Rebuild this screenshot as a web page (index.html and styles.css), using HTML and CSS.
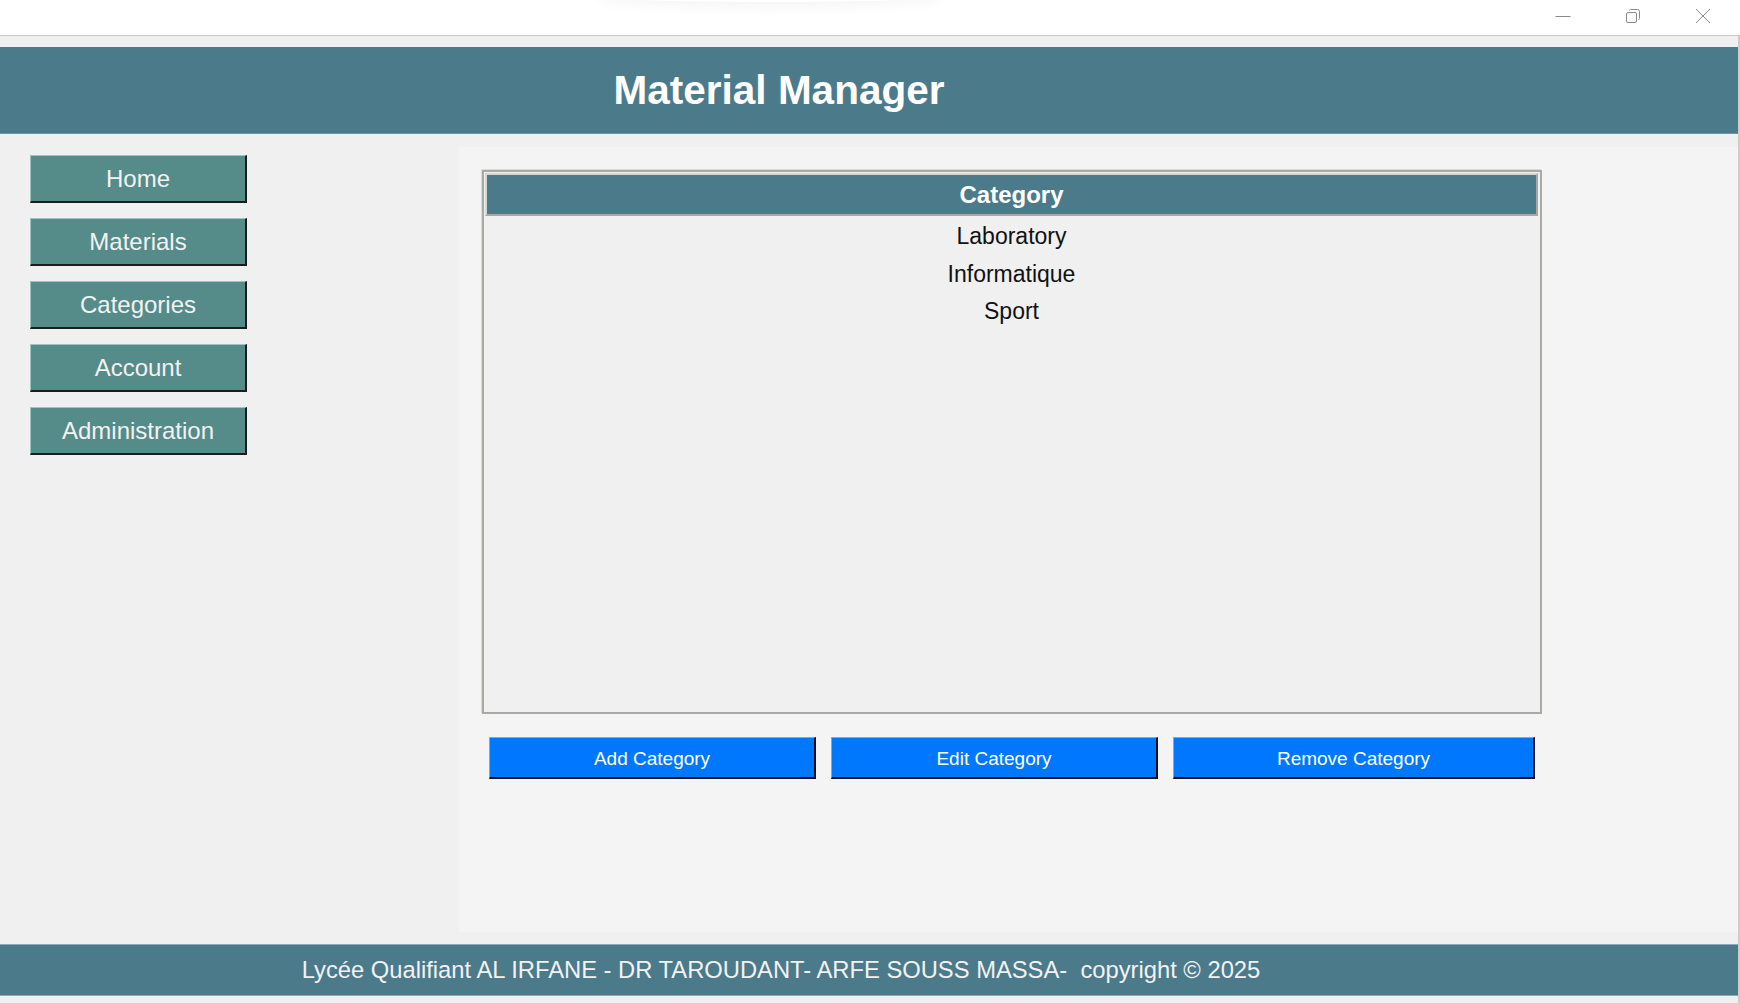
FILE: index.html
```html
<!DOCTYPE html>
<html lang="en">
<head>
<meta charset="utf-8">
<title>Material Manager</title>
<link rel="stylesheet" href="styles.css">
</head>
<body>
<div class="titlebar">
  <div class="tb-shadow"></div>
  <div class="controls">
    <svg class="ctl" width="16" height="16" viewBox="0 0 16 16"><path d="M0.5 8.5H15.5" stroke="#8a8a8a" stroke-width="1" fill="none"/></svg>
    <svg class="ctl" width="16" height="16" viewBox="0 0 16 16"><rect x="1.5" y="4.5" width="10" height="10" rx="1.5" stroke="#8a8a8a" fill="none"/><path d="M4.5 2.5 Q4.5 1.5 5.5 1.5 H12.5 Q14.5 1.5 14.5 3.5 V10.5 Q14.5 11.5 13.5 11.5" stroke="#8a8a8a" fill="none"/></svg>
    <svg class="ctl" width="16" height="16" viewBox="0 0 16 16"><path d="M1 1L15 15M15 1L1 15" stroke="#8a8a8a" stroke-width="1" fill="none"/></svg>
  </div>
</div>
<div class="app">
  <header class="header"><h1 class="title">Material Manager</h1></header>
  <div class="content">
    <nav class="sidebar">
      <div class="nav-btn">Home</div>
      <div class="nav-btn">Materials</div>
      <div class="nav-btn">Categories</div>
      <div class="nav-btn">Account</div>
      <div class="nav-btn">Administration</div>
    </nav>
    <main class="main">
      <div class="table">
        <div class="thead">Category</div>
        <div class="rows">
          <div class="row">Laboratory</div>
          <div class="row">Informatique</div>
          <div class="row">Sport</div>
        </div>
      </div>
      <div class="actions">
        <div class="act-btn w-add">Add Category</div>
        <div class="act-btn w-edit">Edit Category</div>
        <div class="act-btn w-remove">Remove Category</div>
      </div>
    </main>
  </div>
  <footer class="footer"><div class="footer-text">Lycée Qualifiant AL IRFANE - DR TAROUDANT- ARFE SOUSS MASSA-&nbsp; copyright © 2025</div></footer>
</div>
</body>
</html>
```
FILE: styles.css
```css
* { box-sizing: border-box; }
html, body { margin: 0; padding: 0; }
body {
  width: 1740px;
  height: 1003px;
  overflow: hidden;
  background: #f0f0f0;
  font-family: "Liberation Sans", Arial, sans-serif;
}
.titlebar {
  position: relative;
  height: 36px;
  background: #ffffff;
  border-bottom: 1px solid #cbcbcb;
}
.tb-shadow {
  position: absolute;
  left: 600px;
  top: -10px;
  width: 340px;
  height: 12px;
  border-radius: 50%;
  box-shadow: 0 0 14px 4px rgba(0,0,0,0.05);
}
.controls {
  position: absolute;
  right: 29px;
  top: 8px;
  display: flex;
  gap: 54px;
}
.ctl { display: block; }
.app {
  height: 967px;
  border-right: 2px solid #cdcdcd;
  padding-top: 11px;
  display: flex;
  flex-direction: column;
}
.header {
  height: 87px;
  background: #4b7a8b;
  border-bottom: 1px solid #6b93a2;
}
.title {
  margin: 0;
  width: 1558px;
  text-align: center;
  color: #ffffff;
  font-size: 40.5px;
  font-weight: bold;
  line-height: 86px;
}
.content {
  display: flex;
  height: 810px;
}
.sidebar {
  width: 459px;
  padding: 21px 0 0 30px;
  display: flex;
  flex-direction: column;
  gap: 15px;
}
.nav-btn {
  width: 217px;
  height: 48px;
  background: #558b88;
  border-top: 1px solid #9fc4c0;
  border-left: 1px solid #9fc4c0;
  border-right: 2px solid #1c1c1c;
  border-bottom: 2px solid #1c1c1c;
  color: #f2f2f2;
  font-size: 24px;
  line-height: 46px;
  text-align: center;
}
.main {
  flex: 1;
  margin: 13px 0 12px 0;
  background: #f4f4f4;
  padding: 23px 0 0 23px;
}
.table {
  width: 1060px;
  height: 544px;
  background: #f0f0f0;
  border: 2px solid #aaa9a3;
  box-shadow: -1px -1px 0 #dadad6;
  padding: 1px 2px 0 1px;
}
.thead {
  height: 43px;
  background: #4b7a8b;
  border-top: 2px solid #d6d6d0;
  border-left: 2px solid #d6d6d0;
  border-right: 2px solid #a9a8a0;
  border-bottom: 2px solid #a9a8a0;
  color: #ffffff;
  font-weight: bold;
  font-size: 24px;
  line-height: 39px;
  text-align: center;
}
.rows {
  padding-top: 2px;
}
.row {
  height: 37.7px;
  line-height: 37.7px;
  font-size: 23px;
  color: #111111;
  text-align: center;
}
.actions {
  display: flex;
  gap: 15px;
  margin: 23px 0 0 7px;
}
.act-btn {
  height: 42px;
  background: #0078fe;
  border-top: 1px solid #62aeff;
  border-left: 1px solid #62aeff;
  border-right: 2px solid #111111;
  border-bottom: 2px solid #111111;
  color: #ffffff;
  font-size: 19px;
  line-height: 42px;
  text-align: center;
}
.w-add { width: 327px; }
.w-edit { width: 327px; }
.w-remove { width: 362px; }
.footer {
  height: 52px;
  background: #4b7a8b;
  border-top: 1px solid #8aaab6;
  border-bottom: 1px solid #8aaab6;
}
.footer-text {
  width: 1562px;
  text-align: center;
  color: #f2f2f2;
  font-size: 23.75px;
  line-height: 50px;
}
```
